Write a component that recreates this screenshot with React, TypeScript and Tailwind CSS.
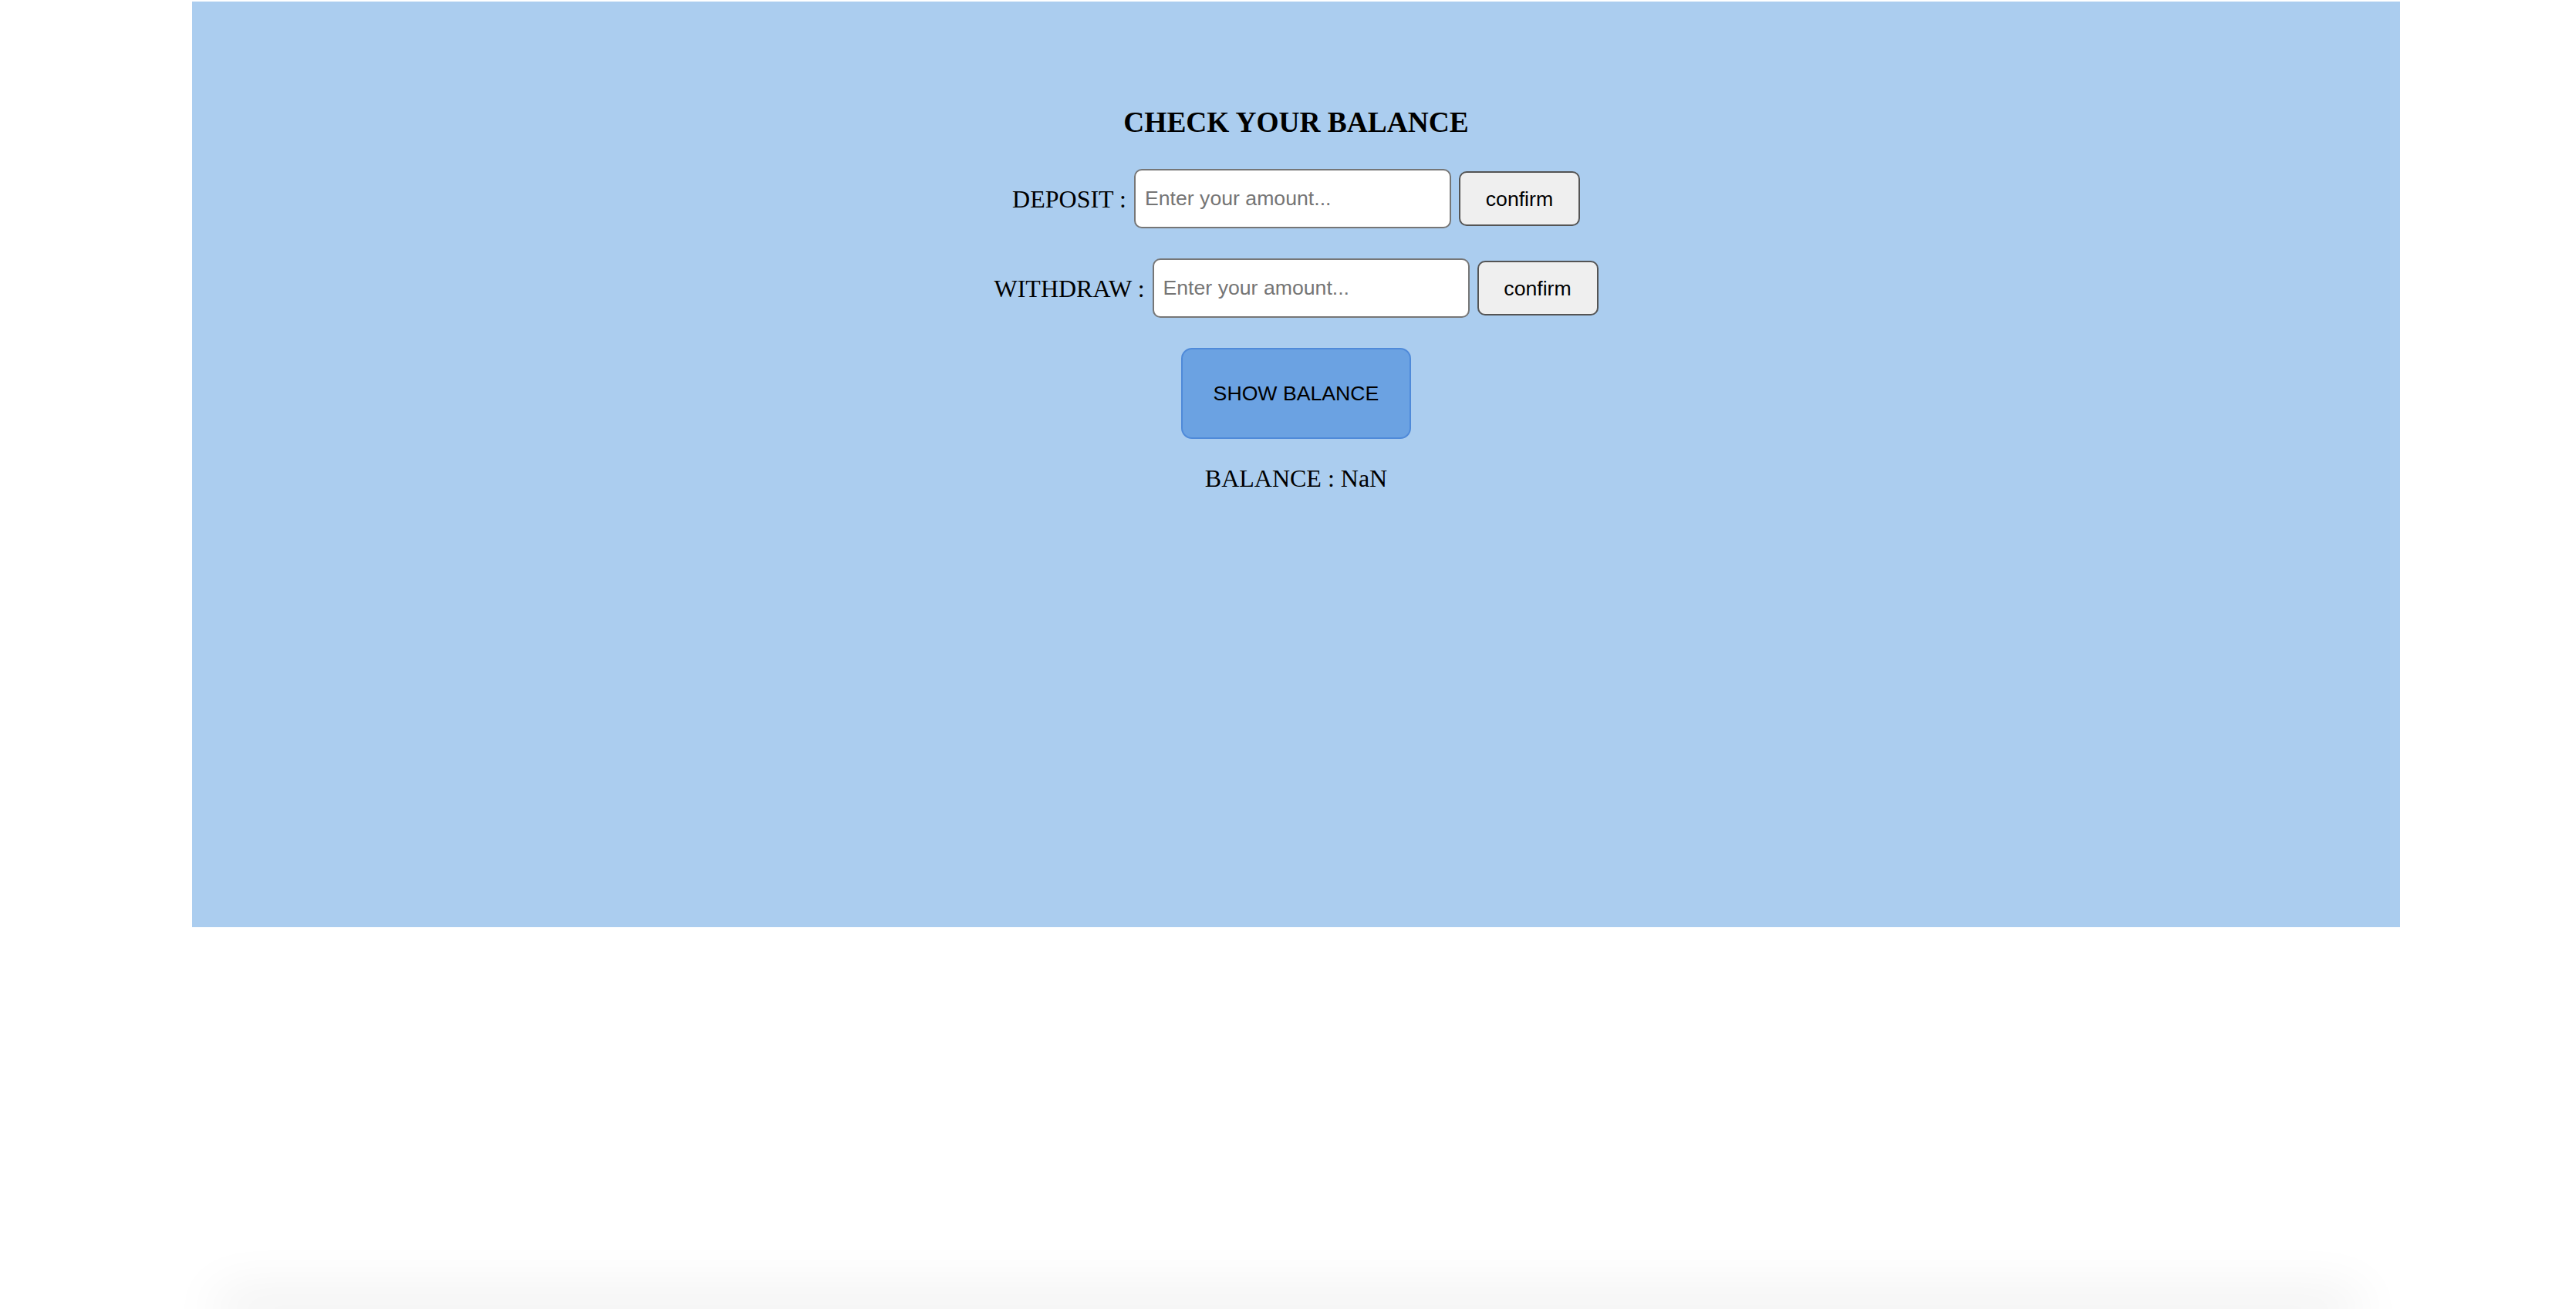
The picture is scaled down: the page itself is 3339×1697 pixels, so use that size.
import { useState } from "react";

const serif = "font-['Liberation_Serif','Times_New_Roman',serif]";
const sans = "font-['Liberation_Sans',Arial,sans-serif]";

const AmountRow = ({ label }: { label: string }) => {
  return (
    <div className="flex items-center justify-center gap-[10px]">
      <span className={`${serif} text-[32px] leading-[32px] text-black`}>{label}</span>
      <input
        type="text"
        placeholder="Enter your amount..."
        className={`${sans} h-[77px] w-[411px] rounded-[10px] border-2 border-[#767676] bg-white pl-[12px] text-[26.67px] text-black placeholder:text-[#757575]`}
      />
      <button
        className={`${sans} h-[71px] w-[157px] rounded-[10px] border-2 border-[#545454] bg-[#efefef] text-[26.67px] text-black`}
      >
        confirm
      </button>
    </div>
  );
};

export default function App() {
  const [balance] = useState(NaN);

  return (
    <div className="flex h-[1697px] flex-col overflow-hidden bg-white">
      <div className="mt-[2px] ml-[249px] flex h-[1200px] w-[2862px] flex-col items-center bg-[#abcdef] pt-[138px]">
        <h3 className={`${serif} h-[38px] text-[37.4px] leading-[38px] font-bold text-black`}>
          CHECK YOUR BALANCE
        </h3>
        <div className="mt-[41px] flex flex-col gap-[39px]">
          <AmountRow label="DEPOSIT :" />
          <AmountRow label="WITHDRAW :" />
        </div>
        <button
          className={`${sans} mt-[39px] h-[118px] w-[298px] rounded-[14px] border-2 border-[#4f8ad9] bg-[#6ba2e2] text-[26.67px] text-black`}
        >
          SHOW BALANCE
        </button>
        <p className={`${serif} mt-[35px] text-[32px] leading-[32px] text-black`}>
          BALANCE : {String(balance)}
        </p>
      </div>
      <div className="mx-[300px] mt-auto h-0 shadow-[0_0_70px_18px_rgba(0,0,0,0.09)]"></div>
    </div>
  );
}
